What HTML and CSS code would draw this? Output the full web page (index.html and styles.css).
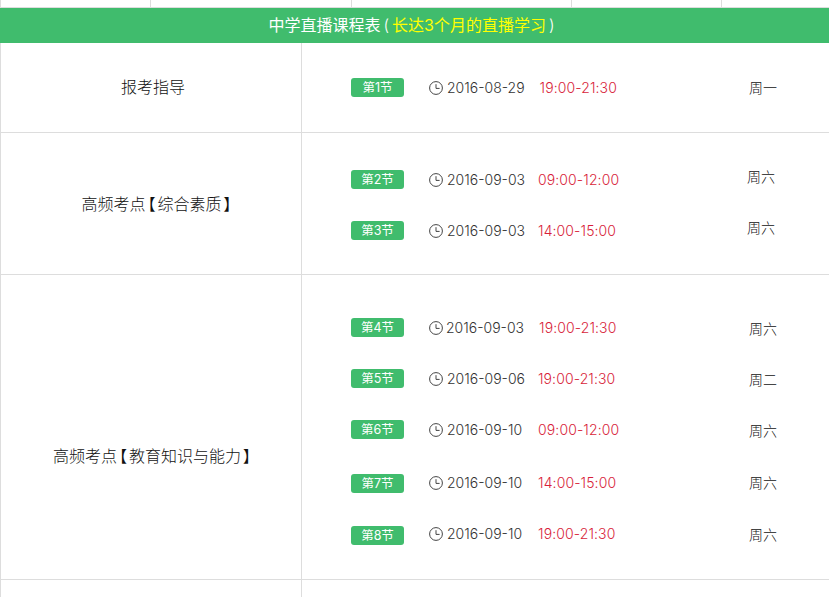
FILE: index.html
```html
<!DOCTYPE html>
<html lang="zh-CN">
<head>
<meta charset="utf-8">
<title>中学直播课程表</title>
<link rel="stylesheet" href="styles.css">
</head>
<body>
<svg class="defs" width="0" height="0" aria-hidden="true"><symbol id="clock" viewBox="0 0 14 14"><circle cx="7" cy="7" r="6.4" fill="none" stroke="currentColor" stroke-width="1"/><path d="M7 3.2V7.4H10.6" fill="none" stroke="currentColor" stroke-width="1"/></symbol></svg>
<div class="stub"><i></i><i></i><i></i><i></i><i></i></div>
<div class="banner">中学直播课程表<span class="paren">(</span><span class="hl">长达3个月的直播学习</span><span class="paren">)</span></div>
<section class="group g1">
  <div class="name">报考指导</div>
  <div class="list">
    <div class="item"><span class="badge">第1节</span><span class="when"><svg class="ic"><use href="#clock"/></svg><span class="date">2016-08-29</span><span class="time">19:00-21:30</span></span><span class="day">周一</span></div>
  </div>
</section>
<section class="group g2">
  <div class="name">高频考点<span class="br">【</span>综合素质<span class="br">】</span></div>
  <div class="list">
    <div class="item raised"><span class="badge">第2节</span><span class="when"><svg class="ic"><use href="#clock"/></svg><span class="date">2016-09-03</span><span class="time near">09:00-12:00</span></span><span class="day">周六</span></div>
    <div class="item raised"><span class="badge">第3节</span><span class="when"><svg class="ic"><use href="#clock"/></svg><span class="date">2016-09-03</span><span class="time near">14:00-15:00</span></span><span class="day">周六</span></div>
  </div>
</section>
<section class="group g3">
  <div class="name">高频考点<span class="br">【</span>教育知识与能力<span class="br">】</span></div>
  <div class="list">
    <div class="item"><span class="badge">第4节</span><span class="when"><svg class="ic"><use href="#clock"/></svg><span class="date tight">2016-09-03</span><span class="time">19:00-21:30</span></span><span class="day">周六</span></div>
    <div class="item"><span class="badge">第5节</span><span class="when"><svg class="ic"><use href="#clock"/></svg><span class="date">2016-09-06</span><span class="time near">19:00-21:30</span></span><span class="day">周二</span></div>
    <div class="item"><span class="badge">第6节</span><span class="when"><svg class="ic"><use href="#clock"/></svg><span class="date">2016-09-10</span><span class="time after-ten">09:00-12:00</span></span><span class="day">周六</span></div>
    <div class="item gap"><span class="badge">第7节</span><span class="when"><svg class="ic"><use href="#clock"/></svg><span class="date">2016-09-10</span><span class="time after-ten">14:00-15:00</span></span><span class="day">周六</span></div>
    <div class="item gap-small"><span class="badge">第8节</span><span class="when"><svg class="ic"><use href="#clock"/></svg><span class="date">2016-09-10</span><span class="time after-ten">19:00-21:30</span></span><span class="day">周六</span></div>
  </div>
</section>
<section class="group g4"><div class="name"></div><div class="list"></div></section>
</body>
</html>
```
FILE: styles.css
```css
* { box-sizing: border-box; }
html, body { margin: 0; padding: 0; height: 597px; overflow: hidden; background: #fff; }
body { font-family: Inter, "Noto Sans CJK SC", sans-serif; color: #333; }
.defs { position: absolute; }
.stub { height: 8px; display: grid; grid-template-columns: 150px 201px 220px 150px 108px; border-bottom: 1px solid #ddd; }
.stub i { border-left: 1px solid #ddd; }
.banner { height: 35px; background: #40bc6d; color: #fff; font-size: 16px; line-height: 34px; text-align: center; padding-right: 3px; }
.paren { margin: 0 3px; font-weight: 300; }
.hl { color: #ff0; }
.group { display: grid; grid-template-columns: 302px 1fr; border-bottom: 1px solid #ddd; }
.g1 { height: 90px; }
.g2 { height: 142px; }
.g3 { height: 305px; }
.g4 { height: 20px; border-bottom: 0; }
.name { border-left: 1px solid #ddd; border-right: 1px solid #ddd; display: flex; align-items: center; justify-content: center; font-size: 16px; font-weight: 300; color: #111; padding: 0 0 3px 4px; font-family: "Noto Sans CJK SC", sans-serif; }
.g2 .name { padding: 0 0 1px 13px; }
.g3 .name { padding: 56px 0 0 4px; }
.br { font-feature-settings: "palt"; margin: 0 2px; }
.list { display: flex; flex-direction: column; justify-content: flex-start; }
.g1 .list { padding-top: 19px; }
.g2 .list { padding-top: 21px; }
.g3 .list { padding-top: 27px; }
.item { height: 51px; flex: none; display: flex; align-items: center; padding-left: 49px; }
.gap { margin-top: 3px; }
.gap-small { margin-top: 1px; }
.badge { width: 53px; height: 19px; border-radius: 3px; background: #40bc6d; color: #fff; font-size: 12.5px; line-height: 19px; text-align: center; }
.when { display: flex; align-items: center; width: 320px; margin-left: 25px; font-size: 14px; font-weight: 300; }
.gap .when { margin-top: -2px; }
.gap-small .when { margin-top: -4px; }
.ic { width: 14px; height: 14px; color: #444; flex: none; margin-top: 1px; }
.date { margin-left: 4px; color: #333; }
.date.tight { margin-left: 3px; }
.time { margin-left: 15px; color: #d81e3a; letter-spacing: 0.1px; }
.time.near { margin-left: 13px; }
.time.after-ten { margin-left: 16px; }
.day { font-size: 14px; font-weight: 300; color: #111; font-family: "Noto Sans CJK SC", sans-serif; }
.g1 .day { margin-top: -2px; }
.gap .day, .gap-small .day { margin-top: -4px; }
.raised .day { margin-top: -8px; margin-left: -2px; }
```
